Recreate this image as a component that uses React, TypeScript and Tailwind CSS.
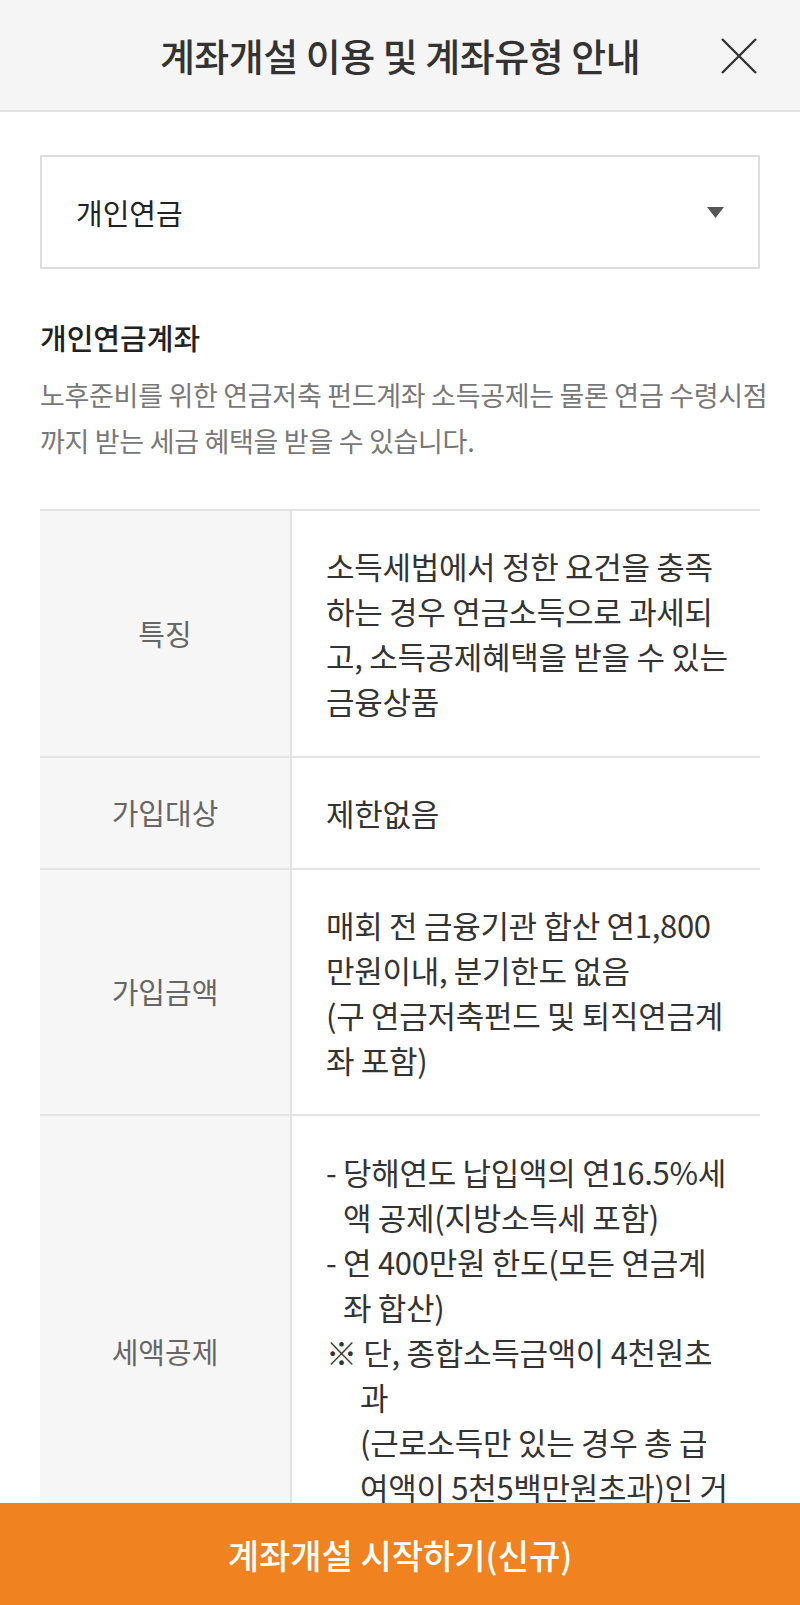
const rows: { label: string; lines: { text: string; indent?: number }[]; pad: string }[] = [
  {
    label: "특징",
    pad: "pt-[32px] pb-[33px]",
    lines: [
      { text: "소득세법에서 정한 요건을 충족" },
      { text: "하는 경우 연금소득으로 과세되" },
      { text: "고, 소득공제혜택을 받을 수 있는" },
      { text: "금융상품" },
    ],
  },
  {
    label: "가입대상",
    pad: "pt-[32px] pb-[33px]",
    lines: [{ text: "제한없음" }],
  },
  {
    label: "가입금액",
    pad: "pt-[32px] pb-[32px]",
    lines: [
      { text: "매회 전 금융기관 합산 연1,800" },
      { text: "만원이내, 분기한도 없음" },
      { text: "(구 연금저축펀드 및 퇴직연금계" },
      { text: "좌 포함)" },
    ],
  },
  {
    label: "세액공제",
    pad: "pt-[33px] pb-[78px]",
    lines: [
      { text: "- 당해연도 납입액의 연16.5%세" },
      { text: "액 공제(지방소득세 포함)", indent: 1 },
      { text: "- 연 400만원 한도(모든 연금계" },
      { text: "좌 합산)", indent: 1 },
      { text: "※ 단, 종합소득금액이 4천원초" },
      { text: "과", indent: 2 },
      { text: "(근로소득만 있는 경우 총 급", indent: 2 },
      { text: "여액이 5천5백만원초과)인 거", indent: 2 },
    ],
  },
];

export default function App() {
  return (
    <div className="flex h-[1605px] w-full flex-col overflow-hidden bg-white font-['Noto_Sans_CJK_KR','Noto_Sans',sans-serif] text-[#333]">
      {/* header */}
      <header className="relative flex h-[112px] shrink-0 items-center justify-center border-b-2 border-[#e3e3e3] bg-[#f5f5f5]">
        <h1 className="text-[38px] font-medium leading-none tracking-[-0.5px] text-[#333]">
          계좌개설 이용 및 계좌유형 안내
        </h1>
        <button className="absolute right-[43px] top-[38px] text-[#333]">
          <svg width="36" height="36" viewBox="0 0 36 36" fill="none" stroke="currentColor" strokeWidth="2.4">
            <path d="M1 1L35 35M35 1L1 35" />
          </svg>
        </button>
      </header>

      <main className="min-h-0 flex-1 overflow-hidden px-[40px]">
        {/* select */}
        <div className="mt-[43px] flex h-[114px] items-center justify-between border-2 border-[#dedede] pl-[34px] pr-[34px]">
          <span className="text-[29px] leading-none text-[#222]">개인연금</span>
          <svg width="17" height="11" viewBox="0 0 17 11">
            <polygon points="0,0 17,0 8.5,11" fill="#555" />
          </svg>
        </div>

        <h2 className="mt-[50px] text-[29px] font-medium leading-[36px] text-[#222]">개인연금계좌</h2>
        <p className="mt-[17px] text-[27px] leading-[46px] tracking-[-0.3px] text-[#777]">
          <span className="block whitespace-nowrap">노후준비를 위한 연금저축 펀드계좌 소득공제는 물론 연금 수령시점</span>
          <span className="block whitespace-nowrap">까지 받는 세금 혜택을 받을 수 있습니다.</span>
        </p>

        {/* table */}
        <div className="mt-[45px] border-t-2 border-[#e3e3e3]">
          {rows.map((row) => (
            <div key={row.label} className="flex border-b-2 border-[#e3e3e3]">
              <div className="flex w-[252px] shrink-0 items-center justify-center border-r-2 border-[#e3e3e3] bg-[#f6f6f6]">
                <span className="text-[29px] text-[#666]">{row.label}</span>
              </div>
              <div className={`flex-1 pl-[34px] text-[31px] leading-[45px] tracking-[-0.3px] text-[#333] ${row.pad}`}>
                {row.lines.map((l, i) => (
                  <div
                    key={i}
                    className={`whitespace-nowrap ${l.indent === 1 ? "pl-[17px]" : l.indent === 2 ? "pl-[34px]" : ""}`}
                  >
                    {l.text}
                  </div>
                ))}
              </div>
            </div>
          ))}
        </div>
      </main>

      <button className="flex h-[102px] w-full shrink-0 items-center justify-center bg-[#f0831f] text-[34px] font-medium text-white">
        계좌개설 시작하기(신규)
      </button>
    </div>
  );
}
